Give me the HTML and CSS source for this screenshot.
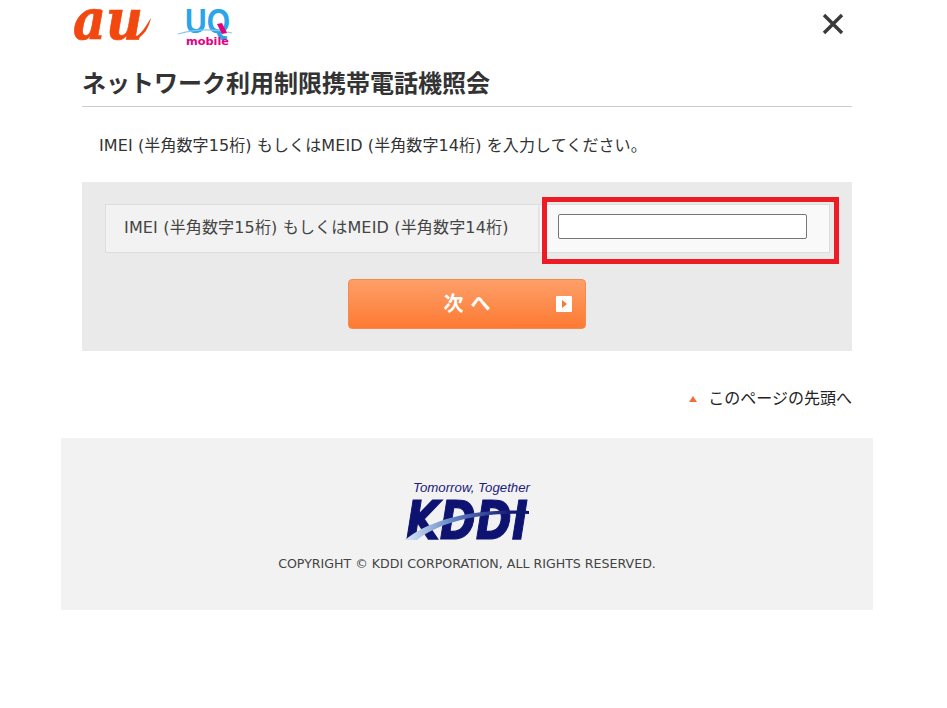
FILE: index.html
```html
<!DOCTYPE html>
<html lang="ja">
<head>
<meta charset="utf-8">
<title>ネットワーク利用制限携帯電話機照会</title>
<link rel="stylesheet" href="styles.css">
</head>
<body>
<div class="page">
  <main class="main">
    <header class="brand">
      <div class="logos">
        <svg class="logo-au" width="80" height="62" viewBox="0 0 80 62" aria-label="au">
          <text x="0" y="34" class="au-text" textLength="70" lengthAdjust="spacingAndGlyphs" transform="scale(1 1.15)">au</text>
          <path d="M64 36 C70 32 74 24 78 18 C76 27 71 37 62 39 Z" fill="#f2480f"/>
        </svg>
        <svg class="logo-uq" width="58" height="62" viewBox="0 0 58 62" aria-label="UQ mobile">
          <text x="7" y="33" class="uq-text" textLength="45" lengthAdjust="spacingAndGlyphs">UQ</text>
          <path d="M0 34 C18 29 38 29 54 33" class="uq-arc"/>
          <path d="M39 24 L44 23 L49 33 L44 34 Z" fill="#e4007f"/>
          <text x="8" y="45" class="uq-sub" textLength="43" lengthAdjust="spacingAndGlyphs">mobile</text>
        </svg>
      </div>
      <svg class="close" width="22" height="22" viewBox="0 0 22 22" aria-label="閉じる">
        <path d="M2 2 L20 20 M20 2 L2 20"/>
      </svg>
    </header>
    <h1 class="title">ネットワーク利用制限携帯電話機照会</h1>
    <p class="lead">IMEI (半角数字15桁) もしくはMEID (半角数字14桁) を入力してください。</p>
    <section class="panel">
      <div class="form-row">
        <label class="form-label" for="imei">IMEI (半角数字15桁) もしくはMEID (半角数字14桁)</label>
        <div class="form-field">
          <input id="imei" class="input" type="text">
          <span class="highlight"></span>
        </div>
      </div>
      <button class="next" type="button">
        <span class="next-label">次 へ</span>
        <span class="next-icon"></span>
      </button>
    </section>
    <p class="pagetop"><a href="#"><span class="tri"></span>このページの先頭へ</a></p>
  </main>
  <footer class="footer">
    <svg class="logo-kddi" width="128" height="62" viewBox="0 0 128 62" aria-label="KDDI Tomorrow, Together">
      <defs>
        <linearGradient id="arc" x1="0" x2="1" y1="0" y2="0">
          <stop offset="0" stop-color="#d8e8f6"/>
          <stop offset="0.4" stop-color="#5f80c4"/>
          <stop offset="0.85" stop-color="#141a72"/>
          <stop offset="1" stop-color="#0e1270"/>
        </linearGradient>
      </defs>
      <text x="8" y="12" class="kddi-tag" textLength="117" lengthAdjust="spacingAndGlyphs">Tomorrow, Together</text>
      <text x="1" y="59" class="kddi-text" textLength="122" lengthAdjust="spacingAndGlyphs">KDDI</text>
      <path d="M0 60 C22 42 62 28 124 31 L124 34 C72 32 34 43 12 60 Z" fill="url(#arc)"/>
    </svg>
    <p class="copyright">COPYRIGHT © KDDI CORPORATION, ALL RIGHTS RESERVED.</p>
  </footer>
</div>
</body>
</html>
```
FILE: styles.css
```css
* { box-sizing: border-box; }
html, body { margin: 0; padding: 0; background: #fff; }
body {
  font-family: "DejaVu Sans", "Noto Sans CJK JP", sans-serif;
  color: #333;
}
.page { width: 934px; height: 708px; overflow: hidden; }
.main { width: 770px; margin: 0 0 0 82px; }
.brand {
  height: 62px;
  display: flex;
  justify-content: space-between;
  align-items: flex-start;
}
.logos { display: flex; align-items: flex-start; margin-left: -9px; }
.logo-au { display: block; overflow: visible; }
.logo-uq { display: block; margin-left: 25px; overflow: visible; }
.au-text { font-family: "DejaVu Serif", serif; font-style: italic; font-weight: 700; font-size: 48px; fill: #f2480f; stroke: #f2480f; stroke-width: 0.6; }
.uq-text { font-family: "Liberation Sans", sans-serif; font-weight: 700; font-size: 35px; fill: #2aa4ea; }
.uq-arc { fill: none; stroke: #86c8ef; stroke-width: 1.2; }
.uq-sub { font-family: "DejaVu Sans", sans-serif; font-weight: 700; font-size: 11px; fill: #e4007f; }
.close { display: block; margin: 13px 8px 0 0; }
.close path { fill: none; stroke: #3a3a3a; stroke-width: 3.4; }
.title {
  margin: 0;
  height: 45px;
  font-family: "Noto Sans CJK JP", sans-serif;
  font-size: 24px;
  line-height: 40px;
  font-weight: 700;
  color: #333;
  border-bottom: 1px solid #ccc;
}
.lead {
  margin: 0;
  padding: 26px 0 0 17px;
  height: 75px;
  font-size: 16px;
  line-height: 26px;
  letter-spacing: 0.1px;
  color: #333;
  white-space: nowrap;
}
.panel {
  height: 169px;
  background: #eaeaea;
  padding: 22px 22px 0 23px;
}
.form-row { display: flex; height: 49px; width: 725px; }
.form-label {
  width: 435px;
  background: #f2f2f2;
  border: 1px solid #ddd;
  border-right: 2px solid #e4e4e4;
  padding-left: 18px;
  font-size: 16px;
  line-height: 45px;
  letter-spacing: 0.16px;
  color: #444;
  white-space: nowrap;
}
.form-field {
  position: relative;
  flex: 1;
  background: #f9f9f9;
  border: 1px solid #ddd;
  border-left: 0;
  padding: 9px 0 0 18px;
}
.input {
  display: block;
  width: 249px;
  height: 25px;
  border: 1px solid #767676;
  border-radius: 2px;
  background: #fff;
  padding: 0;
}
.highlight {
  position: absolute;
  left: 2px;
  top: -8px;
  right: -10px;
  bottom: -12px;
  border: 5px solid #ed1c24;
  pointer-events: none;
}
.next {
  position: relative;
  display: block;
  width: 238px;
  height: 50px;
  margin: 26px 0 0 243px;
  border: 1px solid #f58a4c;
  border-radius: 4px;
  background: linear-gradient(#fd9f68, #fd7a33);
  padding: 0;
  color: #fff;
  font-family: inherit;
  font-size: 20px;
  font-weight: 700;
  text-align: center;
}
.next-label { display: block; line-height: 44px; }
.next-icon {
  position: absolute;
  right: 13px;
  top: 16px;
  width: 16px;
  height: 16px;
  background: #fff;
  border-radius: 1px;
}
.next-icon::after {
  content: "";
  position: absolute;
  left: 6px;
  top: 4px;
  border-left: 5px solid #f47a35;
  border-top: 4px solid transparent;
  border-bottom: 4px solid transparent;
}
.pagetop {
  margin: 0;
  height: 87px;
  padding-top: 34px;
  text-align: right;
  font-size: 16px;
  line-height: 28px;
}
.pagetop a { color: #222; text-decoration: none; }
.tri {
  display: inline-block;
  width: 0;
  height: 0;
  margin-right: 11px;
  vertical-align: 2px;
  border-left: 4.5px solid transparent;
  border-right: 4.5px solid transparent;
  border-bottom: 6px solid #ee7036;
}
.footer {
  width: 812px;
  height: 172px;
  margin-left: 61px;
  background: #f2f2f2;
  padding-top: 42px;
  text-align: center;
}
.logo-kddi { display: block; margin: 0 auto 0 344px; overflow: visible; }
.kddi-tag { font-family: "Liberation Sans", sans-serif; font-style: italic; font-size: 13.5px; fill: #1c2079; }
.kddi-text { font-family: "DejaVu Sans", sans-serif; font-style: italic; font-weight: 700; font-size: 54px; fill: #0e1270; stroke: #0e1270; stroke-width: 1.2; }
.copyright {
  margin: 13px 0 0;
  font-size: 12.6px;
  line-height: 18px;
  color: #444;
}
```
